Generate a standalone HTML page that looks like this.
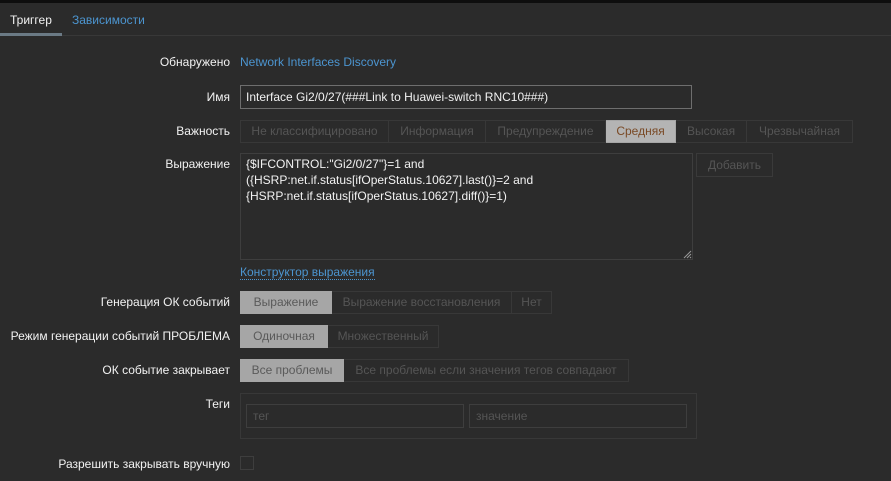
<!DOCTYPE html>
<html><head><meta charset="utf-8"><style>
*{box-sizing:border-box;margin:0;padding:0}
body{width:891px;height:481px;background:#2b2b2b;font-family:"Liberation Sans",Arial,sans-serif;font-size:12px;color:#f2f2f2;position:relative;overflow:hidden;letter-spacing:0}
.a{position:absolute;white-space:nowrap}
.lbl{position:absolute;right:661px;white-space:nowrap;color:#f2f2f2}
.seg{position:absolute;display:flex;height:23px}
.seg div{border:1px solid #383838;border-left:none;color:#555;line-height:21px;text-align:center;white-space:nowrap}
.seg div:first-child{border-left:1px solid #383838}
.seg div.on{background:#a6a6a6;color:#5a5a5a;border-color:#a6a6a6}
.box{position:absolute;border:1px solid #3e3e3e;background:#2b2b2b}
</style></head><body>
<div class="a" style="left:0;top:0;width:891px;height:3px;background:#0e0e0e"></div>
<div class="a" style="left:0;top:35px;width:891px;height:1px;background:#383838"></div>
<div class="a" style="left:0;top:33px;width:62px;height:3px;background:#6b7a85"></div>
<div class="a" style="left:10px;top:13px;color:#f2f2f2">Триггер</div>
<div class="a" style="left:72px;top:13px;color:#4c95d0">Зависимости</div>

<div class="lbl" style="top:55px">Обнаружено</div>
<div class="a" style="left:240px;top:55px;color:#4c95d0">Network Interfaces Discovery</div>

<div class="lbl" style="top:90px">Имя</div>
<div class="box" style="left:240px;top:85px;width:452px;height:24px;border-color:#6e6e6e"></div>
<div class="a" style="left:246px;top:90px">Interface Gi2/0/27(###Link to Huawei-switch RNC10###)</div>

<div class="lbl" style="top:124px">Важность</div>
<div class="seg" style="left:240px;top:120px">
<div style="width:149px">Не классифицировано</div><div style="width:97px">Информация</div><div style="width:120px">Предупреждение</div><div class="on" style="width:70px;color:#7a4a26;background:#b4b4b4">Средняя</div><div style="width:71px">Высокая</div><div style="width:106px">Чрезвычайная</div>
</div>

<div class="lbl" style="top:157px">Выражение</div>
<div class="box" style="left:240px;top:153px;width:453px;height:107px"></div>
<div class="a" style="left:246px;top:156px;line-height:16px">{$IFCONTROL:"Gi2/0/27"}=1 and<br>({HSRP:net.if.status[ifOperStatus.10627].last()}=2 and<br>{HSRP:net.if.status[ifOperStatus.10627].diff()}=1)</div>
<svg class="a" style="left:683px;top:250px" width="9" height="9"><path d="M1 8L8 1M4 8L8 4M7 8L8 7" stroke="#999" stroke-width="1"/></svg>
<div class="box" style="left:696px;top:153px;width:77px;height:24px;border-color:#3a3a3a;color:#555;text-align:center;line-height:22px">Добавить</div>
<div class="a" style="left:240px;top:265px;color:#4c95d0;border-bottom:1px dotted #4c95d0;line-height:14px">Конструктор выражения</div>

<div class="lbl" style="top:295px">Генерация ОК событий</div>
<div class="seg" style="left:240px;top:291px">
<div class="on" style="width:92px">Выражение</div><div style="width:180px">Выражение восстановления</div><div style="width:40px">Нет</div></div>

<div class="lbl" style="top:329px">Режим генерации событий ПРОБЛЕМА</div>
<div class="seg" style="left:240px;top:325px">
<div class="on" style="width:88px">Одиночная</div><div style="width:111px">Множественный</div></div>

<div class="lbl" style="top:363px">ОК событие закрывает</div>
<div class="seg" style="left:240px;top:359px">
<div class="on" style="width:104px">Все проблемы</div><div style="width:285px">Все проблемы если значения тегов совпадают</div></div>

<div class="lbl" style="top:397px">Теги</div>
<div class="box" style="left:240px;top:393px;width:457px;height:46px;border-color:#383838"></div>
<div class="box" style="left:246px;top:404px;width:218px;height:24px;color:#555;padding:4px 0 0 6px">тег</div>
<div class="box" style="left:469px;top:404px;width:218px;height:24px;color:#555;padding:4px 0 0 6px">значение</div>

<div class="lbl" style="top:457px">Разрешить закрывать вручную</div>
<div class="box" style="left:240px;top:456px;width:14px;height:14px;border-color:#3e3e3e"></div>
</body></html>
